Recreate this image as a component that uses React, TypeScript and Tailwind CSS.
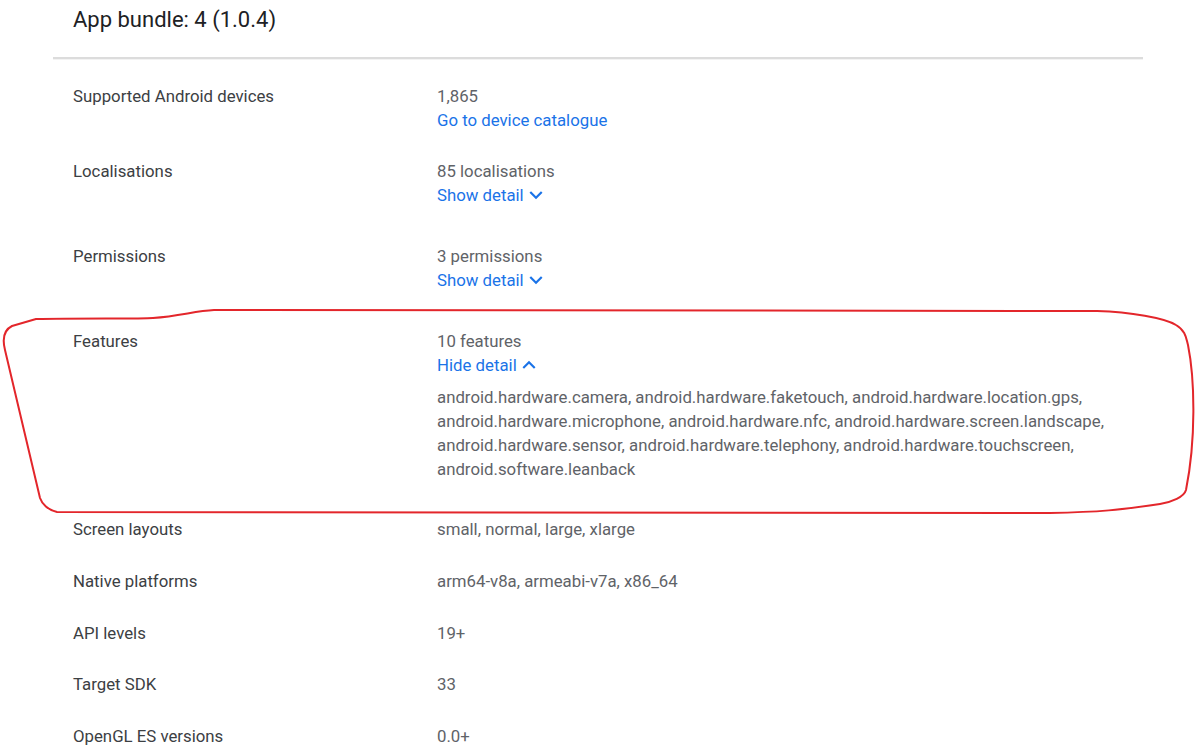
import React from "react";

const ChevronDown = () => (
  <svg width="26" height="26" viewBox="0 0 24 24" className="-ml-[1px] -my-[1px]" fill="#1a73e8">
    <path d="M16.59 8.59L12 13.17 7.41 8.59 6 10l6 6 6-6z" />
  </svg>
);

const ChevronUp = () => (
  <svg width="26" height="26" viewBox="0 0 24 24" className="-ml-[1px] -my-[1px]" fill="#1a73e8">
    <path d="M7.41 15.41L12 10.83l4.59 4.58L18 14l-6-6-6 6z" />
  </svg>
);

const features = [
  "android.hardware.camera",
  "android.hardware.faketouch",
  "android.hardware.location.gps",
  "android.hardware.microphone",
  "android.hardware.nfc",
  "android.hardware.screen.landscape",
  "android.hardware.sensor",
  "android.hardware.telephony",
  "android.hardware.touchscreen",
  "android.software.leanback",
];

function Row({
  label,
  children,
  className = "pt-[14px] pb-[14px]",
}: {
  label: string;
  children: React.ReactNode;
  className?: string;
}) {
  return (
    <div className={`flex px-5 ${className}`}>
      <div className="w-[364px] shrink-0 text-[#3c4043]">{label}</div>
      <div className="flex-1 text-[#5f6368]">{children}</div>
    </div>
  );
}

function DetailLink({ text, up }: { text: string; up?: boolean }) {
  return (
    <div className="flex items-center text-[#1a73e8] h-6">
      <span>{text}</span>
      {up ? <ChevronUp /> : <ChevronDown />}
    </div>
  );
}

export default function App() {
  return (
    <div className="relative w-[1199px] h-[752px] bg-white overflow-hidden font-['Roboto',_'Liberation_Sans',_sans-serif] text-[16.8px] leading-6">
      <div className="ml-[53px] w-[1090px]">
        <div className="h-[57px] pl-5 pt-[6px]">
          <h1 className="text-[22px] leading-[28px] text-[#202124] font-normal">App bundle: 4 (1.0.4)</h1>
        </div>
        <div className="h-[2px] bg-[#dcdcdc]" />
        <div className="h-px bg-[#f3f3f3]" />
        <div className="pt-[10px]">
          <Row label="Supported Android devices" className="pt-[14px] pb-[13px]">
            <div>1,865</div>
            <div className="text-[#1a73e8]">Go to device catalogue</div>
          </Row>
          <Row label="Localisations" className="pt-[14px] pb-[23px]">
            <div>85 localisations</div>
            <DetailLink text="Show detail" />
          </Row>
          <Row label="Permissions" className="pt-[14px] pb-[23px]">
            <div>3 permissions</div>
            <DetailLink text="Show detail" />
          </Row>
          <Row label="Features" className="pt-[14px] pb-[22px]">
            <div>10 features</div>
            <DetailLink text="Hide detail" up />
            <p className="mt-[8px]">{features.join(", ")}</p>
          </Row>
          <Row label="Screen layouts">small, normal, large, xlarge</Row>
          <Row label="Native platforms">arm64-v8a, armeabi-v7a, x86_64</Row>
          <Row label="API levels" className="pt-[14px] pb-[13px]">19+</Row>
          <Row label="Target SDK">33</Row>
          <Row label="OpenGL ES versions">0.0+</Row>
        </div>
      </div>
      <svg
        className="absolute inset-0 pointer-events-none"
        width="1199"
        height="752"
        viewBox="0 0 1199 752"
      >
        <path
          d="M36 319 C 80 318, 140 319, 153 318 C 180 316, 195 311, 214 310 L 1097 311 C 1130 312, 1165 318, 1176 325 C 1186 331, 1186 338, 1188 345 C 1195 380, 1196 440, 1186 490 C 1184 497, 1172 502, 1160 504 C 1120 510, 1100 512, 1050 513 L 57 512 C 48 510, 42 504, 40 498 L 5 350 C 2 338, 4 330, 12 326 L 36 319 Z"
          fill="none"
          stroke="#e3262b"
          strokeWidth="2"
          strokeLinejoin="round"
        />
      </svg>
    </div>
  );
}
